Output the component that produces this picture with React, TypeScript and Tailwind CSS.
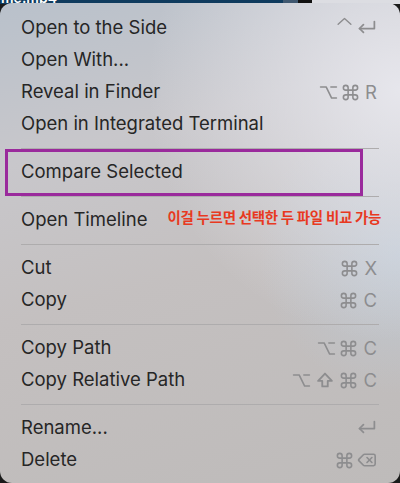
import type { ReactNode } from "react";

const stroke = {
  fill: "none",
  stroke: "currentColor",
  strokeWidth: 2,
  strokeLinecap: "round" as const,
  strokeLinejoin: "round" as const,
};

function Caret() {
  return (
    <svg width="17" height="17" viewBox="0 0 24 24" className="-mt-[9px]" {...stroke}>
      <path d="M3 13 12 5l9 8" />
    </svg>
  );
}

function Return() {
  return (
    <svg width="21" height="21" viewBox="0 0 24 24" {...stroke}>
      <path d="M21 4v8H4" />
      <path d="M8.5 7.5 4 12l4.5 4.5" />
    </svg>
  );
}

function Option() {
  return (
    <svg width="19" height="19" viewBox="0 0 24 24" {...stroke}>
      <path d="M2 5h7l7 14h6" />
      <path d="M15 5h7" />
    </svg>
  );
}

function Cmd() {
  return (
    <svg width="19" height="19" viewBox="0 0 24 24" {...stroke}>
      <path d="M15 6v12a3 3 0 1 0 3-3H6a3 3 0 1 0 3 3V6a3 3 0 1 0-3 3h12a3 3 0 1 0-3-3" />
    </svg>
  );
}

function Shift() {
  return (
    <svg width="22" height="22" viewBox="0 0 24 24" {...stroke}>
      <path d="M9 19v-6H4.5L12 5l7.5 8H15v6H9z" />
    </svg>
  );
}

function Backspace() {
  return (
    <svg width="20" height="18" viewBox="0 0 24 22" {...stroke}>
      <path d="M9 4a2 2 0 0 0-1.4.6L2 10.3a1 1 0 0 0 0 1.4l5.6 5.7A2 2 0 0 0 9 18h11a2 2 0 0 0 2-2V6a2 2 0 0 0-2-2z" />
      <path d="m12 8 6 6" />
      <path d="m18 8-6 6" />
    </svg>
  );
}

function Key({ children }: { children: ReactNode }) {
  return <span className="ml-[2px] text-[18.5px] leading-none">{children}</span>;
}

function Item({ label, keys }: { label: string; keys?: ReactNode }) {
  return (
    <div className="flex h-[32px] items-center justify-between pl-[21px] pr-[23px]">
      <span>{label}</span>
      {keys && <span className="flex items-center gap-[3px] text-[#8d8d8f]">{keys}</span>}
    </div>
  );
}

function Separator() {
  return (
    <div className="flex h-[16px] items-center px-[21px]">
      <div className="h-px w-full bg-[#aeacad]" />
    </div>
  );
}

export default function App() {
  return (
    <div className="flex h-[483px] w-[400px] flex-col overflow-hidden bg-[#1a1a1a]">
      <div className="flex h-[4px] shrink-0 overflow-hidden">
        <div className="w-[283px] bg-[#0f3b5e] pl-[1px] text-[14px] leading-none text-white">
          <span className="-mt-[9px] block font-['Inter',sans-serif] font-semibold">me.mp4</span>
        </div>
        <div className="w-[15px] bg-[#3f5870]" />
        <div className="w-[14px] bg-[#111111]" />
        <div className="flex-1 bg-[#dcdde2]" />
      </div>

      <div className="-mt-px flex-1 rounded-[12px] bg-[radial-gradient(circle_at_100%_18%,rgba(232,232,238,0.95),rgba(232,232,238,0)_45%),radial-gradient(circle_at_100%_52%,rgba(190,205,220,0.7),rgba(190,205,220,0)_30%),linear-gradient(165deg,#b9c1cb_0%,#c8c7cb_28%,#c4c0c0_55%,#bebbba_100%)] pt-[9px] font-['Inter',sans-serif] text-[18.5px] text-[#262626]">
        <Item label="Open to the Side" keys={<><Caret /><Return /></>} />
        <Item label="Open With..." />
        <Item label="Reveal in Finder" keys={<><Option /><Cmd /><Key>R</Key></>} />
        <Item label="Open in Integrated Terminal" />
        <Separator />
        <div className="relative">
          <Item label="Compare Selected" />
          <div className="absolute -top-[7px] -bottom-[8px] left-[5px] right-[37px] border-[3px] border-[#9a2a9c]" />
        </div>
        <Separator />
        <div className="flex h-[32px] items-center pl-[21px]">
          <span>Open Timeline</span>
          <span className="ml-[20px] -mt-[6px] font-['Noto_Sans_CJK_KR',sans-serif] text-[14.5px] font-semibold tracking-[-0.3px] text-[#e8391f]">
            이걸 누르면 선택한 두 파일 비교 가능
          </span>
        </div>
        <Separator />
        <Item label="Cut" keys={<><Cmd /><Key>X</Key></>} />
        <Item label="Copy" keys={<><Cmd /><Key>C</Key></>} />
        <Separator />
        <Item label="Copy Path" keys={<><Option /><Cmd /><Key>C</Key></>} />
        <Item label="Copy Relative Path" keys={<><Option /><Shift /><Cmd /><Key>C</Key></>} />
        <Separator />
        <Item label="Rename..." keys={<Return />} />
        <Item label="Delete" keys={<><Cmd /><Backspace /></>} />
      </div>
    </div>
  );
}
